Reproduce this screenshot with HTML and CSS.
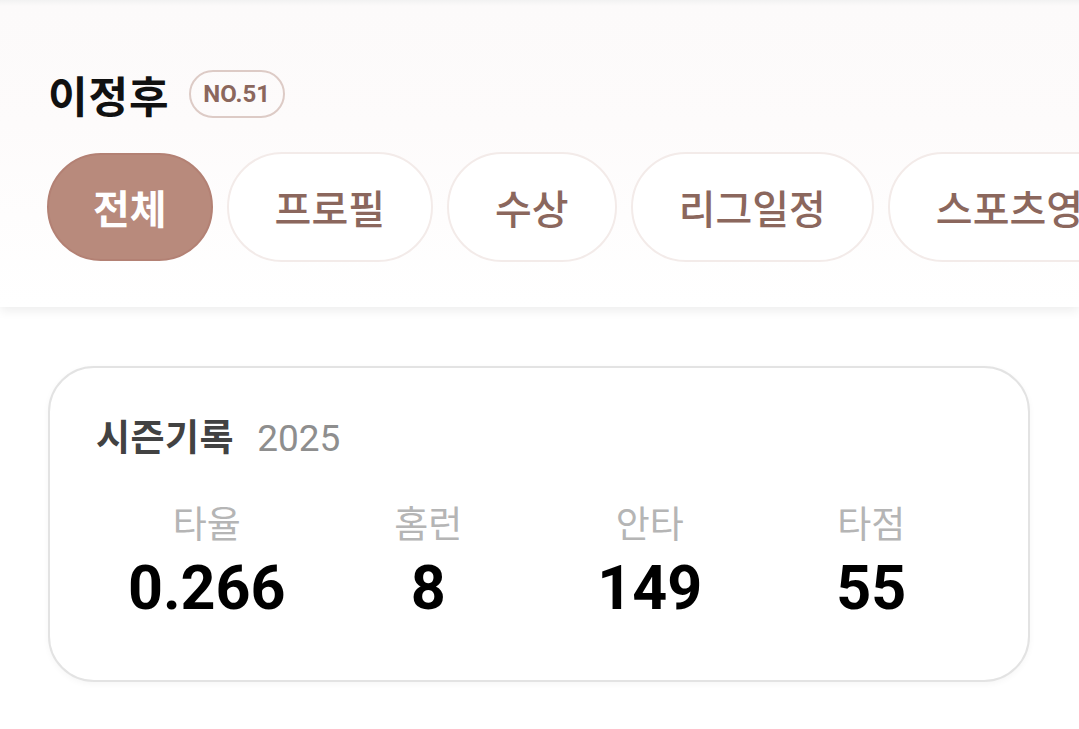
FILE: index.html
```html
<!DOCTYPE html>
<html lang="ko">
<head>
<meta charset="utf-8">
<link rel="stylesheet" href="styles.css">
</head>
<body>
<header class="header">
  <div class="name-row">
    <h1 class="name">이정후</h1>
    <span class="badge">NO.51</span>
  </div>
  <nav class="tabs">
    <button class="tab active">전체</button>
    <button class="tab">프로필</button>
    <button class="tab">수상</button>
    <button class="tab">리그일정</button>
    <button class="tab">스포츠영상</button>
  </nav>
</header>
<main class="content">
  <section class="card">
    <div class="card-title">
      <span class="title">시즌기록</span>
      <span class="year">2025</span>
    </div>
    <div class="stats">
      <div class="stat"><div class="label">타율</div><div class="value">0.266</div></div>
      <div class="stat"><div class="label">홈런</div><div class="value">8</div></div>
      <div class="stat"><div class="label">안타</div><div class="value">149</div></div>
      <div class="stat"><div class="label">타점</div><div class="value">55</div></div>
    </div>
  </section>
</main>
</body>
</html>
```

FILE: styles.css
```css
* { box-sizing: border-box; }
html, body {
  margin: 0;
  padding: 0;
  background: #ffffff;
  overflow: hidden;
}
body {
  font-family: Roboto, "Noto Sans CJK KR", sans-serif;
  width: 1079px;
  height: 729px;
}
.header {
  background: linear-gradient(#f2f2f2 0, #fcfafa 6px, #fdfbfb 40%, #ffffff 100%);
  height: 307px;
  padding-top: 70px;
  box-shadow: 0 4px 10px rgba(0, 0, 0, 0.07);
  position: relative;
  z-index: 1;
  overflow: hidden;
}
.name-row {
  display: flex;
  align-items: center;
  gap: 19px;
  padding-left: 48px;
  height: 48px;
}
.name {
  margin: 0;
  font-family: "Noto Sans CJK KR", sans-serif;
  font-size: 43px;
  font-weight: 700;
  color: #111;
  line-height: 48px;
  letter-spacing: 1px;
}
.badge {
  display: inline-flex;
  align-items: center;
  justify-content: center;
  height: 48px;
  width: 96px;
  border: 2px solid #ddcbc6;
  border-radius: 24px;
  font-family: Roboto, sans-serif;
  font-weight: 700;
  font-size: 24px;
  color: #8b675d;
}
.tabs {
  display: flex;
  gap: 14px;
  margin-top: 34px;
  padding-left: 47px;
  white-space: nowrap;
}
.tab {
  flex: 0 0 auto;
  height: 110px;
  padding: 0 46px;
  border: 2px solid #f3ebe9;
  border-radius: 55px;
  background: #ffffff;
  font-family: "Noto Sans CJK KR", sans-serif;
  font-size: 40px;
  font-weight: 500;
  color: #8b675d;
  line-height: 1;
}
.tab.active {
  background: #b88a7c;
  border-color: #b38174;
  color: #ffffff;
  font-weight: 700;
  height: 108px;
  margin-top: 1px;
  padding: 0 44px;
}
.content {
  padding: 59px 49px 0 48px;
}
.card {
  border: 2px solid #e3e3e3;
  border-radius: 46px;
  padding: 40px 46px 0 46px;
  height: 316px;
  box-shadow: 0 2px 6px rgba(0, 0, 0, 0.04);
  background: #fff;
}
.card-title {
  display: flex;
  align-items: baseline;
  gap: 23px;
  height: 60px;
}
.title {
  font-family: "Noto Sans CJK KR", sans-serif;
  font-size: 37px;
  font-weight: 700;
  color: #424242;
  letter-spacing: 0.5px;
}
.year {
  font-size: 37px;
  color: #8e8e8e;
}
.stats {
  display: grid;
  grid-template-columns: repeat(4, 1fr);
  margin-top: 28px;
}
.stat {
  display: flex;
  flex-direction: column;
  align-items: center;
}
.label {
  font-family: "Noto Sans CJK KR", sans-serif;
  font-size: 37px;
  color: #b5b5b5;
  line-height: 52px;
}
.value {
  font-size: 61px;
  font-weight: 700;
  color: #000;
  line-height: 80px;
}
```
